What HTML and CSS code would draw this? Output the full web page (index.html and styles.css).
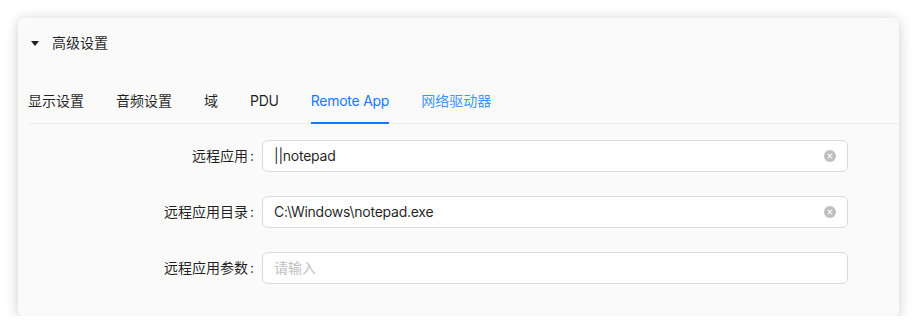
FILE: index.html
```html
<!DOCTYPE html>
<html lang="zh-CN">
<head>
<meta charset="utf-8">
<title>高级设置</title>
<link rel="stylesheet" href="styles.css">
</head>
<body>
<div class="card">
  <div class="card-header">
    <svg class="caret" width="10" height="10" viewBox="0 0 10 10"><path d="M1 3 L9 3 L5 8 Z" fill="#1f1f1f"/></svg>
    <span class="header-title">高级设置</span>
  </div>
  <div class="card-body">
    <div class="tabs">
      <div class="tab">显示设置</div>
      <div class="tab">音频设置</div>
      <div class="tab">域</div>
      <div class="tab latin">PDU</div>
      <div class="tab tab-active latin">Remote App</div>
      <div class="tab tab-hover">网络驱动器</div>
    </div>
    <form class="form">
      <div class="row">
        <label class="label">远程应用</label>
        <div class="input">
          <span class="value latin">||notepad</span>
          <span class="clear"><svg width="12" height="12" viewBox="0 0 12 12"><circle cx="6" cy="6" r="6" fill="#bfbfbf"/><path d="M4.2 4.2 L7.8 7.8 M7.8 4.2 L4.2 7.8" stroke="#fff" stroke-width="1.2" stroke-linecap="round"/></svg></span>
        </div>
      </div>
      <div class="row">
        <label class="label">远程应用目录</label>
        <div class="input">
          <span class="value latin">C:\Windows\notepad.exe</span>
          <span class="clear"><svg width="12" height="12" viewBox="0 0 12 12"><circle cx="6" cy="6" r="6" fill="#bfbfbf"/><path d="M4.2 4.2 L7.8 7.8 M7.8 4.2 L4.2 7.8" stroke="#fff" stroke-width="1.2" stroke-linecap="round"/></svg></span>
        </div>
      </div>
      <div class="row">
        <label class="label">远程应用参数</label>
        <div class="input">
          <span class="value placeholder">请输入</span>
        </div>
      </div>
    </form>
  </div>
</div>
</body>
</html>
```
FILE: styles.css
```css
* { box-sizing: border-box; }
html, body { margin: 0; padding: 0; background: #ffffff; }
body {
  font-family: "Inter", "Noto Sans CJK SC", sans-serif;
  font-size: 14px;
  line-height: 22px;
  color: rgba(0, 0, 0, 0.88);
  padding: 18px 19px 0 18px;
}
.latin { letter-spacing: -0.25px; }
.card {
  width: 881px;
  height: 298px;
  background: #fafafa;
  border-radius: 5px;
  box-shadow: 0 0 12px rgba(0, 0, 0, 0.13), 0 5px 16px rgba(0, 0, 0, 0.08);
  overflow: hidden;
}
.card-header {
  display: flex;
  align-items: center;
  padding: 14px 12px;
  height: 50px;
}
.caret { display: block; margin-right: 12px; }
.header-title { font-size: 14px; }
.card-body { padding: 10px 0 0 10px; }
.tabs {
  display: flex;
  gap: 32px;
  border-bottom: 1px solid #ececec;
  height: 46px;
}
.tab {
  padding: 12px 0;
  line-height: 22px;
  position: relative;
  white-space: nowrap;
}
.tab-active { color: #1677ff; }
.tab-active::after {
  content: "";
  position: absolute;
  left: 0; right: 0; bottom: -1px;
  height: 2px;
  background: #1677ff;
}
.tab-hover { color: #4096ff; }
.form { padding-top: 16px; }
.row {
  display: grid;
  grid-template-columns: 234px 586px;
  align-items: center;
  margin-bottom: 24px;
}
.label {
  text-align: right;
  white-space: nowrap;
  padding-right: 8px;
}
.label::after {
  content: ":";
  margin-left: 2px;
}
.input {
  height: 32px;
  background: #ffffff;
  border: 1px solid #d9d9d9;
  border-radius: 6px;
  padding: 4px 11px;
  display: flex;
  align-items: center;
}
.value { flex: 1; white-space: nowrap; }
.placeholder { color: #bfbfbf; }
.clear { display: flex; }
```
